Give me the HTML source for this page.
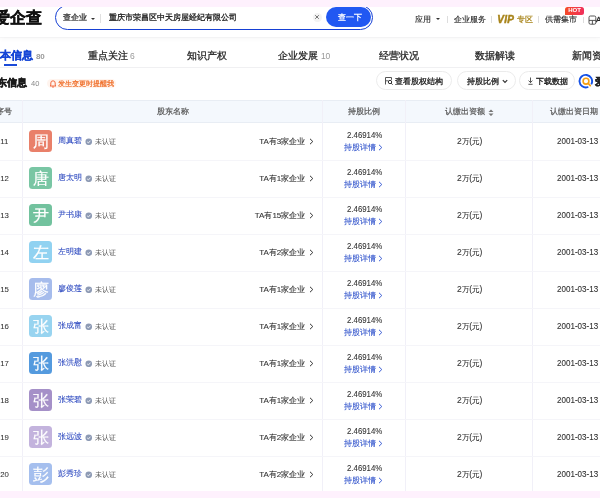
<!DOCTYPE html>
<html><head><meta charset="utf-8">
<style>
*{margin:0;padding:0;box-sizing:border-box}
html,body{width:600px;height:498px;overflow:hidden;background:#fff}
body{position:relative;font-family:"Liberation Sans",sans-serif;color:#333}
.a{position:absolute;white-space:nowrap;line-height:1;-webkit-text-stroke-width:0.3px}
.n{-webkit-text-stroke-width:0.1px}
.band{position:absolute;left:0;width:600px;background:#fef1fd;z-index:5}
.hdr{position:absolute;left:0;top:0;width:600px;height:37px;background:#fff;box-shadow:0 0.5px 0 #ededf0,0 2px 5px rgba(0,0,0,0.035)}
.sep{position:absolute;width:1px;background:#ddd}
.tab{font-size:10px;color:#222;-webkit-text-stroke-width:0.25px}
.cnt{font-size:8.5px;color:#999;-webkit-text-stroke-width:0}
.pill{position:absolute;border:1px solid #ebebeb;border-radius:10px;height:18.7px;top:71px;background:#fff}
.th{position:absolute;top:99.5px;left:0;width:600px;height:23.4px;background:#f4f8fd;border-top:1px solid #e8edf4;border-bottom:1px solid #e8edf4}
.vl{position:absolute;top:99.5px;width:1.3px;height:391px;background:#f1f0f8}
.hl{position:absolute;left:0;width:600px;height:1.5px;background:#f5f5f9}
.htx{font-size:8px;color:#555;-webkit-text-stroke-width:0.2px}
.av{position:absolute;left:29.3px;width:22.5px;height:22.4px;border-radius:3.5px;color:#fff;font-size:16px;text-align:center;line-height:23px;-webkit-text-stroke-width:0.2px}
.nm{font-size:8px;color:#3550c2;-webkit-text-stroke-width:0.1px}
.ver{font-size:6.8px;color:#5a5a5a;-webkit-text-stroke-width:0.03px}
.ta{font-size:8px;color:#333;-webkit-text-stroke-width:0.1px}
.pct{font-size:8px;color:#333}
.det{font-size:8px;color:#3456cc;-webkit-text-stroke-width:0.1px}
.amt{font-size:8px;color:#333}
.dt{font-size:8px;color:#333}
.seq{font-size:7.8px;color:#333;-webkit-text-stroke-width:0.05px}
</style></head><body>
<div style="position:absolute;left:0;top:0;width:600px;height:498px;overflow:hidden;filter:blur(0.3px)"><div class="hdr"></div>
<div class="band" style="top:0;height:6.5px"></div>
<div class="a " style="left:-6.5px;top:9.5px;font-size:16px;font-weight:bold;color:#111;-webkit-text-stroke-width:0.35px">爱企查</div>
<div style="position:absolute;left:55.3px;top:5px;width:318.2px;height:24.8px;border:1.8px solid #1640d4;border-radius:12.4px"></div>
<div class="a " style="left:63.4px;top:14px;font-size:8px;color:#333">查企业</div>
<div class="a" style="left:90.5px;top:17.5px;width:0;height:0;border-left:2px solid transparent;border-right:2px solid transparent;border-top:2.5px solid #333"></div>
<div class="sep" style="left:99.5px;top:14px;height:9px;background:#e0e0e0"></div>
<div class="a " style="left:109px;top:14px;font-size:8px;color:#222">重庆市荣昌区中天房屋经纪有限公司</div>
<div class="a" style="left:312.5px;top:12.5px;width:9px;height:9px;border-radius:50%;background:#f3f3f3"></div>
<svg class="a" style="left:314px;top:14px" width="6" height="6" viewBox="0 0 6 6"><path d="M1.2 1.2L4.8 4.8M4.8 1.2L1.2 4.8" stroke="#666" stroke-width="0.9"/></svg>
<div class="a" style="left:326px;top:7.2px;width:44.6px;height:20px;background:#2158f2;border-radius:10px"></div>
<div class="a " style="left:337.5px;top:14.4px;font-size:8px;font-weight:bold;color:#fff;-webkit-text-stroke-width:0">查一下</div>
<div class="a " style="left:415px;top:16px;font-size:8px;color:#222;-webkit-text-stroke-width:0.12px">应用</div>
<div class="a" style="left:435.5px;top:18px;width:0;height:0;border-left:2px solid transparent;border-right:2px solid transparent;border-top:2.5px solid #333"></div>
<div class="sep" style="left:447px;top:16px;height:7px"></div>
<div class="a " style="left:453.5px;top:16px;font-size:8px;color:#222;-webkit-text-stroke-width:0.12px">企业服务</div>
<div class="sep" style="left:491px;top:16px;height:7px"></div>
<div class="a " style="left:497.3px;top:14.6px;font-size:10px;letter-spacing:0.3px;color:#a8841a;font-weight:bold;font-style:italic;-webkit-text-stroke-width:0.45px">VIP</div>
<div class="a " style="left:517px;top:16px;font-size:8px;color:#a8841a;-webkit-text-stroke-width:0.2px">专区</div>
<div class="sep" style="left:538px;top:16px;height:7px"></div>
<div class="a " style="left:544.5px;top:16px;font-size:8px;color:#222;-webkit-text-stroke-width:0.12px">供需集市</div>
<div class="a" style="left:565px;top:6.8px;width:19.2px;height:7.8px;background:linear-gradient(90deg,#f54a28,#f02e5c);border-radius:2.5px 2.5px 2.5px 0.5px;color:#fff;font-size:6px;font-weight:bold;text-align:center;line-height:7.8px;-webkit-text-stroke-width:0">HOT</div>
<div class="sep" style="left:582.5px;top:17px;height:6px"></div>
<svg class="a" style="left:588px;top:14.5px" width="9" height="10" viewBox="0 0 9 10"><rect x="1" y="1" width="6.8" height="8.2" rx="1.4" fill="none" stroke="#444" stroke-width="0.9"/><path d="M1 5.4H7.8M4.4 5.4V9.2" stroke="#444" stroke-width="0.9"/></svg>
<div class="a " style="left:596px;top:16px;font-size:8px;color:#222">A</div>
<div class="a tab" style="left:-10.6px;top:50.2px;color:#1646d6;font-weight:bold;font-size:10.75px;-webkit-text-stroke-width:0.35px">基本信息<span class="cnt" style="margin-left:2.5px;font-size:8px">80</span></div>
<div class="a" style="left:3.5px;top:64px;width:13px;height:1.5px;background:#1a4ad8"></div>
<div class="a tab" style="left:87.5px;top:50.5px;">重点关注<span class="cnt" style="margin-left:2.5px">6</span></div>
<div class="a tab" style="left:186.7px;top:50.5px;">知识产权</div>
<div class="a tab" style="left:278.4px;top:50.5px;">企业发展<span class="cnt" style="margin-left:2.5px">10</span></div>
<div class="a tab" style="left:379px;top:50.5px;">经营状况</div>
<div class="a tab" style="left:475.3px;top:50.5px;">数据解读</div>
<div class="a tab" style="left:571.6px;top:50.5px;">新闻资讯</div>
<div class="hl" style="top:66.5px;background:#f0f0f2"></div>
<div class="a " style="left:-13px;top:77.8px;font-size:10px;font-weight:bold;color:#1a1a1a;-webkit-text-stroke-width:0.45px">股东信息</div>
<div class="a " style="left:31px;top:80.3px;font-size:7.5px;color:#888;-webkit-text-stroke-width:0">40</div>
<div class="a" style="left:47px;top:79.4px;width:69px;height:9px;border-radius:4.5px;background:#fff4ee"></div>
<div class="a " style="left:57.5px;top:80.8px;font-size:6.9px;color:#ef6c26;-webkit-text-stroke-width:0.2px">发生变更时提醒我</div>
<svg class="a" style="left:48.5px;top:79px" width="8" height="9" viewBox="0 0 8 9"><path d="M1.8 6.2V4A2.2 2.2 0 0 1 6.2 4V6.2L7 7H1Z" fill="none" stroke="#f05a2a" stroke-width="0.9" stroke-linejoin="round"/><path d="M3.1 8H4.9" stroke="#f05a2a" stroke-width="0.9"/></svg>
<div class="pill" style="left:375.5px;width:76.5px"></div>
<svg class="a" style="left:384.8px;top:76.8px" width="8" height="8" viewBox="0 0 8 8"><path d="M0.5 7.5V0.5H6.5V2.8" fill="none" stroke="#555" stroke-width="1"/><path d="M0.5 3.8H3.2" stroke="#555" stroke-width="0.9"/><circle cx="5" cy="5" r="1.7" fill="none" stroke="#333" stroke-width="1"/><path d="M6.1 6.2L7.6 7.6" stroke="#333" stroke-width="1"/></svg>
<div class="a " style="left:395.3px;top:77.8px;font-size:8px;color:#222">查看股权结构</div>
<div class="pill" style="left:457px;width:58.5px"></div>
<div class="a " style="left:467px;top:77.8px;font-size:8px;color:#222">持股比例</div>
<svg class="a" style="left:501.5px;top:78.5px" width="6" height="5" viewBox="0 0 6 5"><path d="M0.8 1.2L3 3.5L5.2 1.2" fill="none" stroke="#333" stroke-width="1.2"/></svg>
<div class="pill" style="left:518.75px;width:56.25px"></div>
<svg class="a" style="left:528.2px;top:77px" width="5" height="8" viewBox="0 0 5 8"><path d="M2.5 0.5V5.6M0.6 3.6L2.5 5.6L4.4 3.6M0.4 7.3H4.6" fill="none" stroke="#444" stroke-width="0.9"/></svg>
<div class="a " style="left:536px;top:77.8px;font-size:8px;color:#222">下载数据</div>
<svg class="a" style="left:578px;top:73px" width="16" height="16" viewBox="0 0 16 16"><path d="M13.6 10.6 A6.3 6.3 0 1 0 9.6 14.2" fill="none" stroke="#1652e6" stroke-width="1.9" stroke-linecap="round"/><circle cx="8" cy="8.2" r="2.9" fill="none" stroke="#f7a012" stroke-width="1.6"/><path d="M10.2 10.4L12.3 12.6" stroke="#f7a012" stroke-width="1.6" stroke-linecap="round"/></svg>
<div class="a " style="left:595px;top:77px;font-size:10px;font-weight:bold;color:#222">爱</div>
<div class="th"></div>
<div class="vl" style="left:22.2px"></div>
<div class="vl" style="left:321.8px"></div>
<div class="vl" style="left:405.2px"></div>
<div class="vl" style="left:532.2px"></div>
<div class="a htx" style="left:-4px;top:108.3px;">序号</div>
<div class="a htx" style="left:157px;top:108.3px;">股东名称</div>
<div class="a htx" style="left:348.3px;top:108.3px;">持股比例</div>
<div class="a htx" style="left:445.3px;top:108.3px;">认缴出资额</div>
<svg class="a" style="left:487.8px;top:108.6px" width="6" height="7.5" viewBox="0 0 6 7.5"><path d="M0.5 3.1L3 0.4L5.5 3.1Z M0.5 4.4L3 7.1L5.5 4.4Z" fill="#777"/></svg>
<div class="a htx" style="left:549.6px;top:108.3px;">认缴出资日期</div>
<div class="hl" style="top:159.5px"></div>
<div class="a seq n" style="left:0.2px;top:138.2px;">11</div>
<div class="av" style="top:130.1px;background:#e9806a">周</div>
<div class="a nm" style="left:58px;top:137.4px;">周真碧</div>
<svg class="a" style="left:85.3px;top:137.7px" width="7.5" height="7.5" viewBox="0 0 8 8"><circle cx="4" cy="4" r="3.5" fill="#8d9ab4"/><path d="M2.3 4.1L3.6 5.3L5.8 2.9" fill="none" stroke="#fff" stroke-width="0.9"/></svg>
<div class="a ver" style="left:95px;top:139.2px;">未认证</div>
<div class="a ta" style="right:294.7px;top:137.9px">TA有3家企业</div>
<svg class="a" style="left:309px;top:137.9px" width="5" height="7" viewBox="0 0 5 7"><path d="M1 0.8L3.8 3.5L1 6.2" fill="none" stroke="#333" stroke-width="1"/></svg>
<div class="a pct n" style="left:346.5px;top:130.8px;font-size:8.8px;transform:scaleX(0.89);transform-origin:0 0">2.46914%</div>
<div class="a det" style="left:344px;top:144.1px;">持股详情</div>
<svg class="a" style="left:377.5px;top:144.2px" width="5" height="7" viewBox="0 0 5 7"><path d="M1 0.8L3.8 3.5L1 6.2" fill="none" stroke="#3b5dd4" stroke-width="1"/></svg>
<div class="a amt n" style="left:457px;top:137.1px;transform:scaleX(0.94);transform-origin:0 0"><span style="font-size:9px">2</span>万<span style="font-size:9px">(</span>元<span style="font-size:9px">)</span></div>
<div class="a dt n" style="left:557px;top:137.1px;font-size:8.6px;transform:scaleX(0.935);transform-origin:0 0">2001-03-13</div>
<div class="hl" style="top:196.5px"></div>
<div class="a seq n" style="left:0.2px;top:175.2px;">12</div>
<div class="av" style="top:167.1px;background:#79c6a4">唐</div>
<div class="a nm" style="left:58px;top:174.4px;">唐太明</div>
<svg class="a" style="left:85.3px;top:174.7px" width="7.5" height="7.5" viewBox="0 0 8 8"><circle cx="4" cy="4" r="3.5" fill="#8d9ab4"/><path d="M2.3 4.1L3.6 5.3L5.8 2.9" fill="none" stroke="#fff" stroke-width="0.9"/></svg>
<div class="a ver" style="left:95px;top:176.2px;">未认证</div>
<div class="a ta" style="right:294.7px;top:174.9px">TA有1家企业</div>
<svg class="a" style="left:309px;top:174.9px" width="5" height="7" viewBox="0 0 5 7"><path d="M1 0.8L3.8 3.5L1 6.2" fill="none" stroke="#333" stroke-width="1"/></svg>
<div class="a pct n" style="left:346.5px;top:167.8px;font-size:8.8px;transform:scaleX(0.89);transform-origin:0 0">2.46914%</div>
<div class="a det" style="left:344px;top:181.1px;">持股详情</div>
<svg class="a" style="left:377.5px;top:181.2px" width="5" height="7" viewBox="0 0 5 7"><path d="M1 0.8L3.8 3.5L1 6.2" fill="none" stroke="#3b5dd4" stroke-width="1"/></svg>
<div class="a amt n" style="left:457px;top:174.1px;transform:scaleX(0.94);transform-origin:0 0"><span style="font-size:9px">2</span>万<span style="font-size:9px">(</span>元<span style="font-size:9px">)</span></div>
<div class="a dt n" style="left:557px;top:174.1px;font-size:8.6px;transform:scaleX(0.935);transform-origin:0 0">2001-03-13</div>
<div class="hl" style="top:233.5px"></div>
<div class="a seq n" style="left:0.2px;top:212.2px;">13</div>
<div class="av" style="top:204.1px;background:#72c29e">尹</div>
<div class="a nm" style="left:58px;top:211.4px;">尹书康</div>
<svg class="a" style="left:85.3px;top:211.7px" width="7.5" height="7.5" viewBox="0 0 8 8"><circle cx="4" cy="4" r="3.5" fill="#8d9ab4"/><path d="M2.3 4.1L3.6 5.3L5.8 2.9" fill="none" stroke="#fff" stroke-width="0.9"/></svg>
<div class="a ver" style="left:95px;top:213.2px;">未认证</div>
<div class="a ta" style="right:294.7px;top:211.9px">TA有15家企业</div>
<svg class="a" style="left:309px;top:211.9px" width="5" height="7" viewBox="0 0 5 7"><path d="M1 0.8L3.8 3.5L1 6.2" fill="none" stroke="#333" stroke-width="1"/></svg>
<div class="a pct n" style="left:346.5px;top:204.8px;font-size:8.8px;transform:scaleX(0.89);transform-origin:0 0">2.46914%</div>
<div class="a det" style="left:344px;top:218.1px;">持股详情</div>
<svg class="a" style="left:377.5px;top:218.2px" width="5" height="7" viewBox="0 0 5 7"><path d="M1 0.8L3.8 3.5L1 6.2" fill="none" stroke="#3b5dd4" stroke-width="1"/></svg>
<div class="a amt n" style="left:457px;top:211.1px;transform:scaleX(0.94);transform-origin:0 0"><span style="font-size:9px">2</span>万<span style="font-size:9px">(</span>元<span style="font-size:9px">)</span></div>
<div class="a dt n" style="left:557px;top:211.1px;font-size:8.6px;transform:scaleX(0.935);transform-origin:0 0">2001-03-13</div>
<div class="hl" style="top:270.5px"></div>
<div class="a seq n" style="left:0.2px;top:249.2px;">14</div>
<div class="av" style="top:241.1px;background:#91d2f1">左</div>
<div class="a nm" style="left:58px;top:248.4px;">左明建</div>
<svg class="a" style="left:85.3px;top:248.7px" width="7.5" height="7.5" viewBox="0 0 8 8"><circle cx="4" cy="4" r="3.5" fill="#8d9ab4"/><path d="M2.3 4.1L3.6 5.3L5.8 2.9" fill="none" stroke="#fff" stroke-width="0.9"/></svg>
<div class="a ver" style="left:95px;top:250.2px;">未认证</div>
<div class="a ta" style="right:294.7px;top:248.9px">TA有2家企业</div>
<svg class="a" style="left:309px;top:248.9px" width="5" height="7" viewBox="0 0 5 7"><path d="M1 0.8L3.8 3.5L1 6.2" fill="none" stroke="#333" stroke-width="1"/></svg>
<div class="a pct n" style="left:346.5px;top:241.8px;font-size:8.8px;transform:scaleX(0.89);transform-origin:0 0">2.46914%</div>
<div class="a det" style="left:344px;top:255.1px;">持股详情</div>
<svg class="a" style="left:377.5px;top:255.2px" width="5" height="7" viewBox="0 0 5 7"><path d="M1 0.8L3.8 3.5L1 6.2" fill="none" stroke="#3b5dd4" stroke-width="1"/></svg>
<div class="a amt n" style="left:457px;top:248.1px;transform:scaleX(0.94);transform-origin:0 0"><span style="font-size:9px">2</span>万<span style="font-size:9px">(</span>元<span style="font-size:9px">)</span></div>
<div class="a dt n" style="left:557px;top:248.1px;font-size:8.6px;transform:scaleX(0.935);transform-origin:0 0">2001-03-13</div>
<div class="hl" style="top:307.5px"></div>
<div class="a seq n" style="left:0.2px;top:286.2px;">15</div>
<div class="av" style="top:278.1px;background:#a6bcec">廖</div>
<div class="a nm" style="left:58px;top:285.4px;">廖俊莲</div>
<svg class="a" style="left:85.3px;top:285.7px" width="7.5" height="7.5" viewBox="0 0 8 8"><circle cx="4" cy="4" r="3.5" fill="#8d9ab4"/><path d="M2.3 4.1L3.6 5.3L5.8 2.9" fill="none" stroke="#fff" stroke-width="0.9"/></svg>
<div class="a ver" style="left:95px;top:287.2px;">未认证</div>
<div class="a ta" style="right:294.7px;top:285.9px">TA有1家企业</div>
<svg class="a" style="left:309px;top:285.9px" width="5" height="7" viewBox="0 0 5 7"><path d="M1 0.8L3.8 3.5L1 6.2" fill="none" stroke="#333" stroke-width="1"/></svg>
<div class="a pct n" style="left:346.5px;top:278.8px;font-size:8.8px;transform:scaleX(0.89);transform-origin:0 0">2.46914%</div>
<div class="a det" style="left:344px;top:292.1px;">持股详情</div>
<svg class="a" style="left:377.5px;top:292.2px" width="5" height="7" viewBox="0 0 5 7"><path d="M1 0.8L3.8 3.5L1 6.2" fill="none" stroke="#3b5dd4" stroke-width="1"/></svg>
<div class="a amt n" style="left:457px;top:285.1px;transform:scaleX(0.94);transform-origin:0 0"><span style="font-size:9px">2</span>万<span style="font-size:9px">(</span>元<span style="font-size:9px">)</span></div>
<div class="a dt n" style="left:557px;top:285.1px;font-size:8.6px;transform:scaleX(0.935);transform-origin:0 0">2001-03-13</div>
<div class="hl" style="top:344.5px"></div>
<div class="a seq n" style="left:0.2px;top:323.2px;">16</div>
<div class="av" style="top:315.1px;background:#98d4f0">张</div>
<div class="a nm" style="left:58px;top:322.4px;">张成富</div>
<svg class="a" style="left:85.3px;top:322.7px" width="7.5" height="7.5" viewBox="0 0 8 8"><circle cx="4" cy="4" r="3.5" fill="#8d9ab4"/><path d="M2.3 4.1L3.6 5.3L5.8 2.9" fill="none" stroke="#fff" stroke-width="0.9"/></svg>
<div class="a ver" style="left:95px;top:324.2px;">未认证</div>
<div class="a ta" style="right:294.7px;top:322.9px">TA有1家企业</div>
<svg class="a" style="left:309px;top:322.9px" width="5" height="7" viewBox="0 0 5 7"><path d="M1 0.8L3.8 3.5L1 6.2" fill="none" stroke="#333" stroke-width="1"/></svg>
<div class="a pct n" style="left:346.5px;top:315.8px;font-size:8.8px;transform:scaleX(0.89);transform-origin:0 0">2.46914%</div>
<div class="a det" style="left:344px;top:329.1px;">持股详情</div>
<svg class="a" style="left:377.5px;top:329.2px" width="5" height="7" viewBox="0 0 5 7"><path d="M1 0.8L3.8 3.5L1 6.2" fill="none" stroke="#3b5dd4" stroke-width="1"/></svg>
<div class="a amt n" style="left:457px;top:322.1px;transform:scaleX(0.94);transform-origin:0 0"><span style="font-size:9px">2</span>万<span style="font-size:9px">(</span>元<span style="font-size:9px">)</span></div>
<div class="a dt n" style="left:557px;top:322.1px;font-size:8.6px;transform:scaleX(0.935);transform-origin:0 0">2001-03-13</div>
<div class="hl" style="top:381.5px"></div>
<div class="a seq n" style="left:0.2px;top:360.2px;">17</div>
<div class="av" style="top:352.1px;background:#549ade">张</div>
<div class="a nm" style="left:58px;top:359.4px;">张洪慰</div>
<svg class="a" style="left:85.3px;top:359.7px" width="7.5" height="7.5" viewBox="0 0 8 8"><circle cx="4" cy="4" r="3.5" fill="#8d9ab4"/><path d="M2.3 4.1L3.6 5.3L5.8 2.9" fill="none" stroke="#fff" stroke-width="0.9"/></svg>
<div class="a ver" style="left:95px;top:361.2px;">未认证</div>
<div class="a ta" style="right:294.7px;top:359.9px">TA有1家企业</div>
<svg class="a" style="left:309px;top:359.9px" width="5" height="7" viewBox="0 0 5 7"><path d="M1 0.8L3.8 3.5L1 6.2" fill="none" stroke="#333" stroke-width="1"/></svg>
<div class="a pct n" style="left:346.5px;top:352.8px;font-size:8.8px;transform:scaleX(0.89);transform-origin:0 0">2.46914%</div>
<div class="a det" style="left:344px;top:366.1px;">持股详情</div>
<svg class="a" style="left:377.5px;top:366.2px" width="5" height="7" viewBox="0 0 5 7"><path d="M1 0.8L3.8 3.5L1 6.2" fill="none" stroke="#3b5dd4" stroke-width="1"/></svg>
<div class="a amt n" style="left:457px;top:359.1px;transform:scaleX(0.94);transform-origin:0 0"><span style="font-size:9px">2</span>万<span style="font-size:9px">(</span>元<span style="font-size:9px">)</span></div>
<div class="a dt n" style="left:557px;top:359.1px;font-size:8.6px;transform:scaleX(0.935);transform-origin:0 0">2001-03-13</div>
<div class="hl" style="top:418.5px"></div>
<div class="a seq n" style="left:0.2px;top:397.2px;">18</div>
<div class="av" style="top:389.1px;background:#a590c8">张</div>
<div class="a nm" style="left:58px;top:396.4px;">张荣碧</div>
<svg class="a" style="left:85.3px;top:396.7px" width="7.5" height="7.5" viewBox="0 0 8 8"><circle cx="4" cy="4" r="3.5" fill="#8d9ab4"/><path d="M2.3 4.1L3.6 5.3L5.8 2.9" fill="none" stroke="#fff" stroke-width="0.9"/></svg>
<div class="a ver" style="left:95px;top:398.2px;">未认证</div>
<div class="a ta" style="right:294.7px;top:396.9px">TA有1家企业</div>
<svg class="a" style="left:309px;top:396.9px" width="5" height="7" viewBox="0 0 5 7"><path d="M1 0.8L3.8 3.5L1 6.2" fill="none" stroke="#333" stroke-width="1"/></svg>
<div class="a pct n" style="left:346.5px;top:389.8px;font-size:8.8px;transform:scaleX(0.89);transform-origin:0 0">2.46914%</div>
<div class="a det" style="left:344px;top:403.1px;">持股详情</div>
<svg class="a" style="left:377.5px;top:403.2px" width="5" height="7" viewBox="0 0 5 7"><path d="M1 0.8L3.8 3.5L1 6.2" fill="none" stroke="#3b5dd4" stroke-width="1"/></svg>
<div class="a amt n" style="left:457px;top:396.1px;transform:scaleX(0.94);transform-origin:0 0"><span style="font-size:9px">2</span>万<span style="font-size:9px">(</span>元<span style="font-size:9px">)</span></div>
<div class="a dt n" style="left:557px;top:396.1px;font-size:8.6px;transform:scaleX(0.935);transform-origin:0 0">2001-03-13</div>
<div class="hl" style="top:455.5px"></div>
<div class="a seq n" style="left:0.2px;top:434.2px;">19</div>
<div class="av" style="top:426.1px;background:#c3b3dd">张</div>
<div class="a nm" style="left:58px;top:433.4px;">张远波</div>
<svg class="a" style="left:85.3px;top:433.7px" width="7.5" height="7.5" viewBox="0 0 8 8"><circle cx="4" cy="4" r="3.5" fill="#8d9ab4"/><path d="M2.3 4.1L3.6 5.3L5.8 2.9" fill="none" stroke="#fff" stroke-width="0.9"/></svg>
<div class="a ver" style="left:95px;top:435.2px;">未认证</div>
<div class="a ta" style="right:294.7px;top:433.9px">TA有2家企业</div>
<svg class="a" style="left:309px;top:433.9px" width="5" height="7" viewBox="0 0 5 7"><path d="M1 0.8L3.8 3.5L1 6.2" fill="none" stroke="#333" stroke-width="1"/></svg>
<div class="a pct n" style="left:346.5px;top:426.8px;font-size:8.8px;transform:scaleX(0.89);transform-origin:0 0">2.46914%</div>
<div class="a det" style="left:344px;top:440.1px;">持股详情</div>
<svg class="a" style="left:377.5px;top:440.2px" width="5" height="7" viewBox="0 0 5 7"><path d="M1 0.8L3.8 3.5L1 6.2" fill="none" stroke="#3b5dd4" stroke-width="1"/></svg>
<div class="a amt n" style="left:457px;top:433.1px;transform:scaleX(0.94);transform-origin:0 0"><span style="font-size:9px">2</span>万<span style="font-size:9px">(</span>元<span style="font-size:9px">)</span></div>
<div class="a dt n" style="left:557px;top:433.1px;font-size:8.6px;transform:scaleX(0.935);transform-origin:0 0">2001-03-13</div>
<div class="hl" style="top:492.5px"></div>
<div class="a seq n" style="left:0.2px;top:471.2px;">20</div>
<div class="av" style="top:463.1px;background:#a5bfee">彭</div>
<div class="a nm" style="left:58px;top:470.4px;">彭秀珍</div>
<svg class="a" style="left:85.3px;top:470.7px" width="7.5" height="7.5" viewBox="0 0 8 8"><circle cx="4" cy="4" r="3.5" fill="#8d9ab4"/><path d="M2.3 4.1L3.6 5.3L5.8 2.9" fill="none" stroke="#fff" stroke-width="0.9"/></svg>
<div class="a ver" style="left:95px;top:472.2px;">未认证</div>
<div class="a ta" style="right:294.7px;top:470.9px">TA有2家企业</div>
<svg class="a" style="left:309px;top:470.9px" width="5" height="7" viewBox="0 0 5 7"><path d="M1 0.8L3.8 3.5L1 6.2" fill="none" stroke="#333" stroke-width="1"/></svg>
<div class="a pct n" style="left:346.5px;top:463.8px;font-size:8.8px;transform:scaleX(0.89);transform-origin:0 0">2.46914%</div>
<div class="a det" style="left:344px;top:477.1px;">持股详情</div>
<svg class="a" style="left:377.5px;top:477.2px" width="5" height="7" viewBox="0 0 5 7"><path d="M1 0.8L3.8 3.5L1 6.2" fill="none" stroke="#3b5dd4" stroke-width="1"/></svg>
<div class="a amt n" style="left:457px;top:470.1px;transform:scaleX(0.94);transform-origin:0 0"><span style="font-size:9px">2</span>万<span style="font-size:9px">(</span>元<span style="font-size:9px">)</span></div>
<div class="a dt n" style="left:557px;top:470.1px;font-size:8.6px;transform:scaleX(0.935);transform-origin:0 0">2001-03-13</div>
<div class="band" style="top:490.7px;height:8px"></div></div>
</body></html>
